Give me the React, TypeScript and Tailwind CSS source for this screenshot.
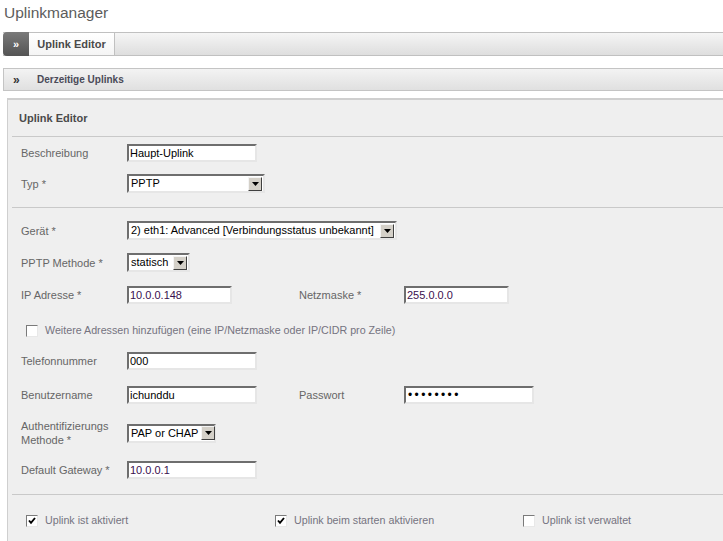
import React from 'react';

const FONT = { fontFamily: '"Liberation Sans", Arial, sans-serif' };

function Field({ className, value, purple }: { className: string; value: string; purple?: boolean }) {
  return (
    <div
      className={`flex h-[18px] items-center border-2 border-t-[#6e6e6e] border-l-[#6e6e6e] border-r-[#e6e6e6] border-b-[#e6e6e6] bg-white pl-[1px] text-[11px] ${purple ? 'text-[#3a0f4f]' : 'text-black'} ${className}`}
    >
      {value}
    </div>
  );
}

function Select({ className, value }: { className: string; value: string }) {
  return (
    <div
      className={`flex h-[19px] items-center justify-between border-2 border-t-[#6e6e6e] border-l-[#6e6e6e] border-r-[#e6e6e6] border-b-[#e6e6e6] bg-white pl-[2px] pr-[1px] text-[11px] text-black ${className}`}
    >
      <span className="whitespace-nowrap">{value}</span>
      <span className="ml-[3px] flex h-[14px] w-[14px] shrink-0 items-center justify-center border border-t-[#f4f4f4] border-l-[#f4f4f4] border-r-[#404040] border-b-[#404040] bg-[#d4d0c8]">
        <svg width="7" height="4" viewBox="0 0 7 4">
          <polygon points="0,0 7,0 3.5,4" fill="#000" />
        </svg>
      </span>
    </div>
  );
}

function Check({ checked, label }: { checked?: boolean; label: string }) {
  return (
    <div className="flex h-[13px] items-center">
      <span className="flex h-[12px] w-[12px] items-center justify-center border border-t-[#7a7a7a] border-l-[#7a7a7a] border-r-[#e8e8e8] border-b-[#e8e8e8] bg-white">
        {checked && (
          <svg width="8" height="8" viewBox="0 0 8 8">
            <path d="M1 3.5 L3 5.8 L7 1" stroke="#000" strokeWidth="1.9" fill="none" />
          </svg>
        )}
      </span>
      <span className="ml-[7px] whitespace-nowrap text-[10.7px] text-[#75737f]">{label}</span>
    </div>
  );
}

function Label({ children }: { children: React.ReactNode }) {
  return <div className="text-[11px] leading-[14px] text-[#666]">{children}</div>;
}

export default function App() {
  return (
    <div className="h-[541px] w-[723px] overflow-hidden bg-white" style={FONT}>
      <div className="h-[32px] pl-[4px] pt-[3px] text-[15.5px] leading-[20px] text-[#5c5c5c]">Uplinkmanager</div>

      {/* tab bar */}
      <div className="ml-[3px] flex h-[24px] border-y border-[#c0c0c0] bg-gradient-to-b from-[#f5f5f5] to-[#dedede]">
        <div className="-my-px flex w-[26px] items-center justify-center rounded-l-[4px] bg-gradient-to-b from-[#7a7a7a] to-[#545454] text-[11px] font-bold text-white">
          »
        </div>
        <div className="flex w-[86px] items-center justify-center border-r border-[#c0c0c0] bg-gradient-to-b from-white to-[#f4f4f4] text-[11px] font-bold text-[#4a4a4a]">
          Uplink Editor
        </div>
      </div>

      {/* section bar */}
      <div className="ml-[3px] mt-[12px] flex h-[23px] items-center border-y border-l border-[#c4c4c4] bg-gradient-to-b from-[#f3f3f3] to-[#e0e0e0] text-[10px] font-bold text-[#4a4a58]">
        <span className="ml-[9px] w-[24px] text-[12px] text-[#333]">»</span>
        <span>Derzeitige Uplinks</span>
      </div>

      {/* panel */}
      <div className="ml-[7px] mt-[7px] h-[460px] border-l border-t-2 border-[#cfcfcf] bg-[#efefef]">
        <div className="flex h-[36px] items-center pl-[11px] text-[11px] font-bold text-[#4a4a4a]">Uplink Editor</div>
        <div className="ml-[4px] border-t border-[#c9c9c9]" />

        <div className="pl-[13px]">
          <div className="mt-[7px] grid grid-cols-[106px_auto] items-center">
            <Label>Beschreibung</Label>
            <Field className="w-[130px]" value="Haupt-Uplink" />
          </div>
          <div className="mt-[12px] grid grid-cols-[106px_auto] items-center">
            <Label>Typ *</Label>
            <Select className="w-[138px]" value="PPTP" />
          </div>
        </div>

        <div className="ml-[4px] mt-[14px] border-t border-[#c9c9c9]" />

        <div className="pl-[13px]">
          <div className="mt-[13px] grid grid-cols-[106px_auto] items-center">
            <Label>Gerät *</Label>
            <div>
              <Select className="w-[270px]" value="2) eth1: Advanced [Verbindungsstatus unbekannt]" />
            </div>
          </div>
          <div className="mt-[13px] grid grid-cols-[106px_auto] items-center">
            <Label>PPTP Methode *</Label>
            <div>
              <Select className="w-[63px]" value="statisch" />
            </div>
          </div>
          <div className="mt-[14px] grid grid-cols-[106px_172px_105px_auto] items-center">
            <Label>IP Adresse *</Label>
            <Field className="w-[105px]" value="10.0.0.148" purple />
            <Label>Netzmaske *</Label>
            <Field className="w-[105px]" value="255.0.0.0" purple />
          </div>
          <div className="ml-[5px] mt-[20px]">
            <Check label="Weitere Adressen hinzufügen (eine IP/Netzmaske oder IP/CIDR pro Zeile)" />
          </div>
          <div className="mt-[15px] grid grid-cols-[106px_auto] items-center">
            <Label>Telefonnummer</Label>
            <Field className="w-[130px]" value="000" />
          </div>
          <div className="mt-[16px] grid grid-cols-[106px_172px_105px_auto] items-center">
            <Label>Benutzername</Label>
            <Field className="w-[130px]" value="ichunddu" />
            <Label>Passwort</Label>
            <Field className="w-[130px] pl-[2px] text-[12px] tracking-[2.4px]" value="••••••••" />
          </div>
          <div className="mt-[15px] grid grid-cols-[106px_auto] items-center">
            <Label>
              Authentifizierungs
              <br />
              Methode *
            </Label>
            <div>
              <Select className="w-[89px]" value="PAP or CHAP" />
            </div>
          </div>
          <div className="mt-[14px] grid grid-cols-[106px_auto] items-center">
            <Label>Default Gateway *</Label>
            <Field className="w-[130px]" value="10.0.0.1" purple />
          </div>
        </div>

        <div className="ml-[4px] mt-[15px] border-t border-[#c9c9c9]" />

        <div className="ml-[18px] mt-[19px] grid grid-cols-[249px_248px_auto]">
          <Check checked label="Uplink ist aktiviert" />
          <Check checked label="Uplink beim starten aktivieren" />
          <Check label="Uplink ist verwaltet" />
        </div>
      </div>
    </div>
  );
}
